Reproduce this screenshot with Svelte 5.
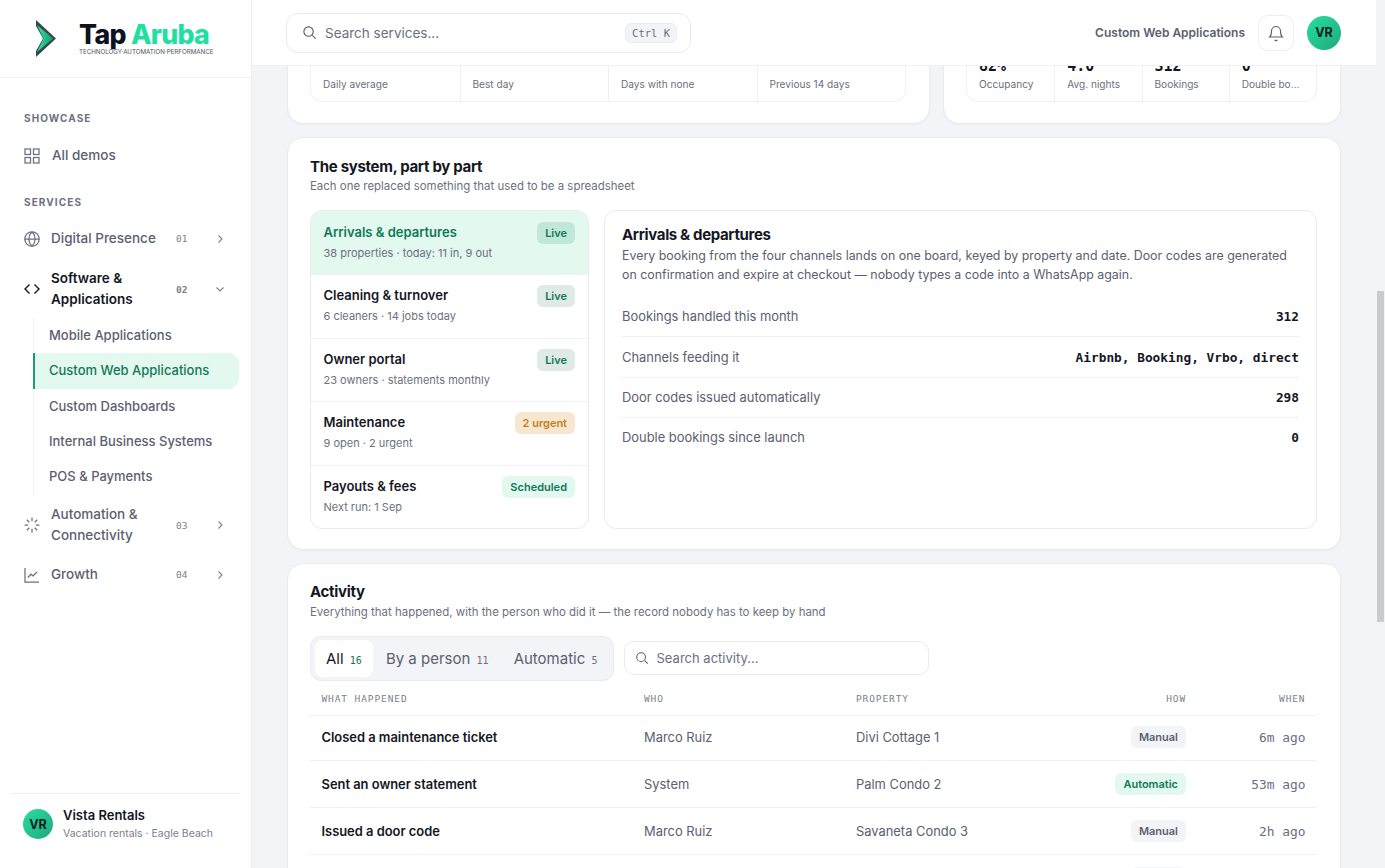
<script>
  import { onMount } from 'svelte'

  let scroller

  const parts = [
    { name: 'Arrivals & departures', sub: '38 properties · today: 11 in, 9 out', tag: 'Live', kind: 'live', active: true },
    { name: 'Cleaning & turnover', sub: '6 cleaners · 14 jobs today', tag: 'Live', kind: 'live' },
    { name: 'Owner portal', sub: '23 owners · statements monthly', tag: 'Live', kind: 'live' },
    { name: 'Maintenance', sub: '9 open · 2 urgent', tag: '2 urgent', kind: 'warn' },
    { name: 'Payouts & fees', sub: 'Next run: 1 Sep', tag: 'Scheduled', kind: 'sched' }
  ]

  const facts = [
    ['Bookings handled this month', '312'],
    ['Channels feeding it', 'Airbnb, Booking, Vrbo, direct'],
    ['Door codes issued automatically', '298'],
    ['Double bookings since launch', '0']
  ]

  const activity = [
    ['Closed a maintenance ticket', 'Marco Ruiz', 'Divi Cottage 1', 'Manual', '6m ago'],
    ['Sent an owner statement', 'System', 'Palm Condo 2', 'Automatic', '53m ago'],
    ['Issued a door code', 'Marco Ruiz', 'Savaneta Condo 3', 'Manual', '2h ago'],
    ['Assigned a cleaner', 'Ana Croes', 'Divi Cottage 1', 'Manual', '3h ago'],
    ['Synced a new booking', 'System', 'Palm Condo 2', 'Automatic', '4h ago'],
    ['Approved a payout', 'Ana Croes', 'Savaneta Condo 3', 'Manual', '5h ago'],
    ['Opened a maintenance ticket', 'Marco Ruiz', 'Palm Condo 2', 'Manual', '6h ago'],
    ['Expired a door code', 'System', 'Divi Cottage 1', 'Automatic', '8h ago'],
    ['Updated a cleaning checklist', 'Ana Croes', 'Palm Condo 2', 'Manual', '9h ago'],
    ['Replied to a guest', 'Marco Ruiz', 'Savaneta Condo 3', 'Manual', '11h ago'],
    ['Synced a new booking', 'System', 'Divi Cottage 1', 'Automatic', '12h ago'],
    ['Closed a maintenance ticket', 'Marco Ruiz', 'Palm Condo 2', 'Manual', '1d ago'],
    ['Moved a checkout time', 'Ana Croes', 'Divi Cottage 1', 'Manual', '1d ago'],
    ['Issued a door code', 'System', 'Palm Condo 2', 'Automatic', '1d ago'],
    ['Assigned a cleaner', 'Ana Croes', 'Savaneta Condo 3', 'Manual', '2d ago'],
    ['Added an owner note', 'Marco Ruiz', 'Divi Cottage 1', 'Manual', '2d ago']
  ]

  onMount(() => {
    scroller.scrollTop = 763
  })
</script>

<div class="shell">
  <aside class="side">
    <div class="brand">
      <svg class="mark" width="22" height="38" viewBox="0 0 22 38">
        <defs>
          <linearGradient id="mk" x1="0" y1="0" x2="1" y2="0">
            <stop offset="0" stop-color="#2ee6a6" />
            <stop offset="1" stop-color="#149a73" />
          </linearGradient>
        </defs>
        <path d="M1 0 L21 18.500 L1 37 L1 31 L8 18.500 L1 6 Z" fill="#39474d" />
        <path d="M2 5 L18 18.500 L2 32 L8.500 18.500 Z" fill="url(#mk)" />
      </svg>
      <div class="wordmark">
        <div class="word"><span class="tap">Tap</span> <span class="aruba">Aruba</span></div>
        <div class="tagline">TECHNOLOGY·AUTOMATION·PERFORMANCE</div>
      </div>
    </div>

    <nav class="nav">
      <div class="eyebrow">SHOWCASE</div>
      <a class="item demos" href="/">
        <svg class="ico" viewBox="0 0 16 16"><rect x="1" y="1" width="5.500" height="5.500" /><rect x="9.500" y="1" width="5.500" height="5.500" /><rect x="1" y="9.500" width="5.500" height="5.500" /><rect x="9.500" y="9.500" width="5.500" height="5.500" /></svg>
        <span class="label">All demos</span>
      </a>

      <div class="eyebrow second">SERVICES</div>
      <a class="item" href="/">
        <svg class="ico" viewBox="0 0 16 16"><circle cx="8" cy="8" r="7.200" /><path d="M.8 8h14.400M8 .8c4.200 4.400 4.200 10 0 14.400M8 .8c-4.200 4.400-4.200 10 0 14.400" /></svg>
        <span class="label">Digital Presence</span>
        <span class="num">01</span>
        <svg class="chev" viewBox="0 0 10 10"><path d="M3.500 1.500 7 5 3.500 8.500" /></svg>
      </a>
      <a class="item open" href="/">
        <svg class="ico dark" viewBox="0 0 16 16"><path d="M5.500 3.500 1 8l4.500 4.500M10.500 3.500 15 8l-4.500 4.500" /></svg>
        <span class="label">Software &amp; Applications</span>
        <span class="num">02</span>
        <svg class="chev" viewBox="0 0 10 10"><path d="M1.500 3.500 5 7l3.500-3.500" /></svg>
      </a>
      <div class="children">
        <a href="/">Mobile Applications</a>
        <a class="current" href="/">Custom Web Applications</a>
        <a href="/">Custom Dashboards</a>
        <a href="/">Internal Business Systems</a>
        <a href="/">POS &amp; Payments</a>
      </div>
      <a class="item" href="/">
        <svg class="ico" viewBox="0 0 16 16"><path d="M8 .6v3.600M8 11.800v3.600M.6 8h3.600M11.800 8h3.600M2.800 2.800l2.500 2.500M10.700 10.700l2.500 2.500M2.800 13.200l2.500-2.500M10.700 5.300l2.500-2.500" /></svg>
        <span class="label">Automation &amp; Connectivity</span>
        <span class="num">03</span>
        <svg class="chev" viewBox="0 0 10 10"><path d="M3.500 1.500 7 5 3.500 8.500" /></svg>
      </a>
      <a class="item" href="/">
        <svg class="ico" viewBox="0 0 16 16"><path d="M1 1v14h14" /><path d="M3.800 10.500 7 7.200l2 1.800 4-4" /></svg>
        <span class="label">Growth</span>
        <span class="num">04</span>
        <svg class="chev" viewBox="0 0 10 10"><path d="M3.500 1.500 7 5 3.500 8.500" /></svg>
      </a>
    </nav>

    <div class="account">
      <div class="avatar small">VR</div>
      <div>
        <div class="acc-name">Vista Rentals</div>
        <div class="acc-sub">Vacation rentals · Eagle Beach</div>
      </div>
    </div>
  </aside>

  <main class="main" bind:this={scroller}>
    <header class="topbar">
      <div class="search">
        <svg class="sico" viewBox="0 0 16 16"><circle cx="7" cy="7" r="5" /><path d="m11 11 3.500 3.500" /></svg>
        <span class="ph">Search services...</span>
        <kbd>Ctrl K</kbd>
      </div>
      <div class="crumb">Custom Web Applications</div>
      <button class="bell" aria-label="Notifications">
        <svg viewBox="0 0 16 16" width="18" height="18"><path d="M4 6.200a4 4 0 0 1 8 0c0 4 1.600 5.300 1.600 5.300H2.400S4 10.200 4 6.200Z" /><path d="M6.800 14a1.300 1.300 0 0 0 2.400 0" /></svg>
      </button>
      <div class="avatar">VR</div>
    </header>

    <div class="content">
      <div class="above"></div>

      <div class="top-row">
        <section class="card stats-card">
          <div class="stats">
            <div class="stat"><div class="value high">11.4</div><div class="key">Daily average</div></div>
            <div class="stat"><div class="value high">19</div><div class="key">Best day</div></div>
            <div class="stat"><div class="value high">2</div><div class="key">Days with none</div></div>
            <div class="stat"><div class="value high">9.8</div><div class="key">Previous 14 days</div></div>
          </div>
        </section>
        <section class="card stats-card">
          <div class="stats">
            <div class="stat"><div class="value">82%</div><div class="key">Occupancy</div></div>
            <div class="stat"><div class="value">4.0</div><div class="key">Avg. nights</div></div>
            <div class="stat"><div class="value">312</div><div class="key">Bookings</div></div>
            <div class="stat"><div class="value">0</div><div class="key">Double bookings</div></div>
          </div>
        </section>
      </div>

      <section class="card system">
        <h2>The system, part by part</h2>
        <p class="lede">Each one replaced something that used to be a spreadsheet</p>
        <div class="split">
          <ul class="parts">
            {#each parts as part}
              <li class:active={part.active}>
                <div>
                  <div class="part-name">{part.name}</div>
                  <div class="part-sub">{part.sub}</div>
                </div>
                <span class="tag {part.kind}">{part.tag}</span>
              </li>
            {/each}
          </ul>
          <div class="detail">
            <h3>Arrivals &amp; departures</h3>
            <p>Every booking from the four channels lands on one board, keyed by property and date. Door codes are generated on confirmation and expire at checkout — nobody types a code into a WhatsApp again.</p>
            <dl>
              {#each facts as [key, val]}
                <div class="fact"><dt>{key}</dt><dd>{val}</dd></div>
              {/each}
            </dl>
          </div>
        </div>
      </section>

      <section class="card activity">
        <h2>Activity</h2>
        <p class="lede">Everything that happened, with the person who did it — the record nobody has to keep by hand</p>
        <div class="filters">
          <div class="tabs">
            <button class="tab on">All <span class="count">16</span></button>
            <button class="tab">By a person <span class="count">11</span></button>
            <button class="tab">Automatic <span class="count">5</span></button>
          </div>
          <div class="search mini">
            <svg class="sico" viewBox="0 0 16 16"><circle cx="7" cy="7" r="5" /><path d="m11 11 3.500 3.500" /></svg>
            <span class="ph">Search activity...</span>
          </div>
        </div>
        <table>
          <colgroup><col class="c1" /><col class="c2" /><col class="c3" /><col class="c4" /><col /></colgroup>
          <thead>
            <tr><th>WHAT HAPPENED</th><th>WHO</th><th>PROPERTY</th><th class="right">HOW</th><th class="right">WHEN</th></tr>
          </thead>
          <tbody>
            {#each activity as [what, who, where, how, when]}
              <tr>
                <td class="what">{what}</td>
                <td>{who}</td>
                <td>{where}</td>
                <td class="right"><span class="tag {how === 'Manual' ? 'manual' : 'sched'}">{how}</span></td>
                <td class="right when">{when}</td>
              </tr>
            {/each}
          </tbody>
        </table>
      </section>
    </div>
  </main>

  <div class="rail"><div class="thumb"></div></div>
</div>

<style>
  :global(body) {
    margin: 0;
    font-family: Inter, "Noto Sans", sans-serif;
    color: #14171f;
    background: #f3f4f7;
  }
  .shell {
    display: flex;
    height: 100vh;
    overflow: hidden;
  }
  a {
    text-decoration: none;
    color: inherit;
  }

  /* sidebar */
  .side {
    width: 251px;
    flex: none;
    display: flex;
    flex-direction: column;
    background: #fff;
    border-right: 1px solid #eceef1;
  }
  .brand {
    height: 78px;
    box-sizing: border-box;
    display: flex;
    align-items: center;
    gap: 22px;
    padding: 0 0 0 35px;
    border-bottom: 1px solid #f1f2f4;
  }
  .mark {
    flex: none;
  }
  .word {
    font-size: 26.700px;
    font-weight: 800;
    line-height: 27px;
    letter-spacing: -0.700px;
    white-space: nowrap;
  }
  .tap {
    color: #0c1220;
  }
  .aruba {
    color: #1ee0a0;
  }
  .tagline {
    font-size: 6.200px;
    line-height: 8px;
    color: #4b5563;
    white-space: nowrap;
  }
  .nav {
    flex: 1;
    padding: 33px 12px 0;
  }
  .eyebrow {
    font-size: 10px;
    font-weight: 700;
    letter-spacing: 1.100px;
    line-height: 14px;
    color: #6b7080;
    padding-left: 12px;
  }
  .eyebrow.second {
    margin-top: 21px;
  }
  .item {
    display: flex;
    align-items: center;
    padding: 8px 12px 8px 10px;
    font-size: 13.500px;
    font-weight: 500;
    line-height: 21px;
    color: #5b6070;
  }
  .item .label {
    flex: 0 1 118px;
    min-width: 0;
  }
  .demos {
    margin-top: 10px;
    padding-left: 12px;
    padding-top: 10px;
  }
  .demos .ico {
    margin-right: 12px;
    margin-left: 0;
  }
  .eyebrow.second + .item {
    margin-top: 11px;
  }
  .ico {
    width: 16px;
    height: 16px;
    flex: none;
    margin: 0 11px 0 2px;
    fill: none;
    stroke: #6b7080;
    stroke-width: 1.250;
  }
  .ico.dark {
    stroke: #14171f;
    stroke-width: 1.400;
  }
  .num {
    font-family: "DejaVu Sans Mono", monospace;
    font-size: 9.500px;
    color: #7b8090;
    width: 12px;
    margin: 0 27px 0 auto;
    flex: none;
  }
  .chev {
    width: 10px;
    height: 10px;
    flex: none;
    fill: none;
    stroke: #7b8090;
    stroke-width: 1.100;
    margin-right: 2px;
  }
  .open {
    padding-top: 11px;
    padding-bottom: 8px;
    color: #14171f;
    font-weight: 600;
  }
  .children {
    margin-left: 21px;
    padding-bottom: 2px;
    border-left: 1px solid #eef0f3;
  }
  .children + .item {
    padding-bottom: 10px;
  }
  .children a {
    display: block;
    height: 35.250px;
    line-height: 35.250px;
    padding-left: 15px;
    font-size: 13px;
    font-weight: 500;
    color: #5b6070;
    white-space: nowrap;
  }
  .children .current {
    background: #e3f8ef;
    color: #0f7a56;
    font-weight: 550;
    box-shadow: inset 2px 0 0 #1a9d6c;
    border-radius: 0 11px 11px 0;
    margin-left: -1px;
    padding-left: 16px;
  }
  .account {
    display: flex;
    align-items: center;
    gap: 10px;
    margin: 0 11px;
    height: 75px;
    box-sizing: border-box;
    padding: 0 0 14px 12px;
    border-top: 1px solid #eceef1;
  }
  .acc-name {
    font-size: 13px;
    font-weight: 600;
    line-height: 17px;
    color: #14171f;
  }
  .acc-sub {
    font-size: 10.500px;
    line-height: 17px;
    margin-top: 1px;
    color: #7b8090;
    white-space: nowrap;
  }
  .avatar {
    width: 34px;
    height: 34px;
    border-radius: 50%;
    flex: none;
    display: flex;
    align-items: center;
    justify-content: center;
    background: linear-gradient(135deg, #27dfa0, #1fa87e);
    color: #0b1f1e;
    font-size: 12.500px;
    font-weight: 700;
  }
  .avatar.small {
    width: 30px;
    height: 30px;
  }

  /* main column */
  .main {
    flex: 1;
    min-width: 0;
    overflow-y: scroll;
    scrollbar-width: none;
    background: #f3f4f7;
  }
  .rail {
    width: 9px;
    flex: none;
    background: #f3f4f7;
  }
  .thumb {
    width: 7px;
    height: 331px;
    margin: 291px 0 0 1px;
    background: #c9cbcf;
  }
  .topbar {
    position: sticky;
    top: 0;
    z-index: 5;
    height: 66px;
    box-sizing: border-box;
    display: flex;
    align-items: center;
    padding: 0 35px 0 34px;
    background: #fff;
    border-bottom: 1px solid #eef0f3;
  }
  .search {
    display: flex;
    align-items: center;
    width: 405px;
    height: 40px;
    box-sizing: border-box;
    padding: 0 13px 0 15px;
    border: 1px solid #e9ebef;
    border-radius: 12px;
    background: #fff;
  }
  .sico {
    width: 15px;
    height: 15px;
    flex: none;
    fill: none;
    stroke: #5b6070;
    stroke-width: 1.200;
    margin-right: 8px;
  }
  .ph {
    flex: 1;
    font-size: 13.500px;
    color: #6b7080;
  }
  kbd {
    font-family: "DejaVu Sans Mono", monospace;
    font-size: 10.500px;
    color: #6b7080;
    background: #f3f4f7;
    border: 1px solid #e9ebef;
    border-radius: 6px;
    padding: 3px 6px;
  }
  .crumb {
    margin-left: auto;
    font-size: 12px;
    font-weight: 600;
    color: #5b6070;
  }
  .bell {
    width: 36px;
    height: 36px;
    margin: 0 13px 0 13px;
    padding: 0;
    display: flex;
    align-items: center;
    justify-content: center;
    background: #fff;
    border: 1px solid #eceef1;
    border-radius: 10px;
  }
  .bell svg {
    fill: none;
    stroke: #5b6070;
    stroke-width: 1;
  }

  .content {
    display: flex;
    flex-direction: column;
    gap: 13px;
    padding: 24px 35px 23px 35px;
  }
  .above {
    height: 604px;
  }
  .card {
    box-sizing: border-box;
    background: #fff;
    border: 1px solid #e9ebef;
    border-radius: 16px;
    box-shadow: 0 1px 2px rgba(16, 24, 40, 0.03);
  }
  .top-row {
    display: grid;
    grid-template-columns: 643px minmax(0, 1fr);
    gap: 13px;
  }
  .stats-card {
    height: 180px;
    display: flex;
    flex-direction: column;
    justify-content: flex-end;
    padding: 0 23px 21px 22px;
  }
  .stats {
    display: grid;
    grid-template-columns: repeat(4, minmax(0, 1fr));
    border: 1px solid #eef0f3;
    border-radius: 12px;
  }
  .stat {
    padding: 14px 12px 9px 12px;
    min-width: 0;
  }
  .stat + .stat {
    border-left: 1px solid #eef0f3;
  }
  .value {
    font-family: "DejaVu Sans Mono", monospace;
    font-size: 15px;
    line-height: 18px;
    font-weight: 700;
    margin-bottom: 2px;
  }
  .value.high {
    margin-bottom: 12px;
  }
  .key {
    font-size: 10.100px;
    line-height: 15px;
    color: #6b7080;
    white-space: nowrap;
    overflow: hidden;
    text-overflow: ellipsis;
  }

  h2 {
    margin: 0;
    font-size: 15px;
    font-weight: 700;
    line-height: 20px;
    letter-spacing: -0.300px;
    color: #14171f;
  }
  .lede {
    margin: 0;
    font-size: 11.450px;
    line-height: 18px;
    color: #6b7080;
  }
  .system {
    padding: 19px 23px 20px 22px;
  }
  .split {
    display: grid;
    grid-template-columns: 279px minmax(0, 1fr);
    gap: 15px;
    margin-top: 15px;
  }
  .parts {
    list-style: none;
    margin: 0;
    padding: 0;
    border: 1px solid #e9ebef;
    border-radius: 12px;
    overflow: hidden;
  }
  .parts li {
    display: flex;
    justify-content: space-between;
    align-items: flex-start;
    height: 63.400px;
    box-sizing: border-box;
    padding: 11px 13px 0 12.500px;
  }
  .parts li:first-child {
    padding-top: 12px;
  }
  .parts li + li {
    border-top: 1px solid #f0f1f4;
  }
  .parts .active {
    background: #e3f8ef;
  }
  .part-name {
    font-size: 13px;
    font-weight: 600;
    line-height: 19px;
    color: #14171f;
  }
  .active .part-name {
    color: #0f7a56;
  }
  .part-sub {
    font-size: 11px;
    line-height: 15px;
    margin-top: 4px;
    color: #6b7080;
    white-space: nowrap;
  }
  .tag {
    display: inline-block;
    font-size: 11px;
    font-weight: 600;
    line-height: 22px;
    padding: 0 8px;
    border-radius: 6px;
    white-space: nowrap;
  }
  .parts .tag {
    margin-top: -1px;
  }
  .tag.live {
    background: #dfe9e5;
    color: #0f7a56;
  }
  .active .tag.live {
    background: #c0e7d8;
  }
  .tag.warn {
    background: #f7e7d1;
    color: #c47f1c;
  }
  .tag.sched {
    background: #e3f8ef;
    color: #0f7a56;
  }
  .tag.manual {
    background: #f3f4f7;
    color: #5b6070;
  }
  .detail {
    border: 1px solid #e9ebef;
    border-radius: 12px;
    padding: 14px 17px 0;
    height: 319px;
    box-sizing: border-box;
  }
  h3 {
    margin: 0;
    font-size: 15px;
    font-weight: 700;
    line-height: 20px;
    letter-spacing: -0.350px;
  }
  .detail p {
    margin: 1px 0 0;
    font-size: 12.400px;
    line-height: 19px;
    color: #5b6070;
  }
  dl {
    margin: 12px 0 0;
  }
  .fact {
    display: flex;
    justify-content: space-between;
    align-items: center;
    height: 40.400px;
    box-sizing: border-box;
  }
  .fact + .fact {
    border-top: 1px solid #f0f1f4;
  }
  dt {
    font-size: 12.900px;
    color: #5b6070;
  }
  dd {
    margin: 0;
    font-family: "DejaVu Sans Mono", monospace;
    font-size: 12.800px;
    font-weight: 600;
    color: #14171f;
  }
  .activity {
    padding: 18px 23px 23px 22px;
  }
  .activity .lede {
    margin-top: 1px;
  }
  .filters {
    display: flex;
    align-items: flex-start;
    gap: 10px;
    margin-top: 15px;
  }
  .tabs {
    display: flex;
    align-items: center;
    height: 45px;
    box-sizing: border-box;
    padding: 0 4px;
    background: #f3f4f8;
    border: 1px solid #e9ebef;
    border-radius: 11px;
  }
  .tab {
    height: 37px;
    padding: 0 11px;
    border: 0;
    border-radius: 8px;
    background: transparent;
    font-family: inherit;
    font-size: 15px;
    color: #5b6070;
    margin-right: 3px;
    white-space: nowrap;
  }
  .tab:last-child {
    margin-right: 0;
  }
  .tab.on {
    background: #fff;
    color: #14171f;
    margin-right: 2px;
  }
  .count {
    font-family: "DejaVu Sans Mono", monospace;
    font-size: 10px;
    margin-left: 2px;
    color: #6b7080;
  }
  .on .count {
    color: #0f7a56;
  }
  .search.mini {
    width: 305px;
    height: 34px;
    margin-top: 5px;
    border-radius: 10px;
    padding-left: 10px;
  }
  .mini .sico {
    width: 14px;
    height: 14px;
    margin-right: 8px;
  }
  .mini .ph {
    font-size: 13px;
  }
  table {
    width: 100%;
    table-layout: fixed;
    border-collapse: collapse;
  }
  .c1 {
    width: 322.500px;
  }
  .c2,
  .c3 {
    width: 212px;
  }
  .c4 {
    width: 141px;
  }
  th {
    height: 34px;
    padding: 0 11.500px;
    text-align: left;
    font-family: "DejaVu Sans Mono", monospace;
    font-size: 9.500px;
    font-weight: 400;
    letter-spacing: 0.900px;
    color: #7b8090;
    border-bottom: 1px solid #f0f1f4;
  }
  td {
    height: 46px;
    padding: 0 11.500px;
    font-size: 12.900px;
    color: #5b6070;
    border-bottom: 1px solid #f0f1f4;
    white-space: nowrap;
  }
  tbody tr:first-child td {
    height: 42px;
    padding-bottom: 2px;
  }
  .what {
    font-weight: 600;
    color: #14171f;
  }
  .right {
    text-align: right;
  }
  .when {
    font-family: "DejaVu Sans Mono", monospace;
    font-size: 12.900px;
    color: #6b7080;
  }
</style>
